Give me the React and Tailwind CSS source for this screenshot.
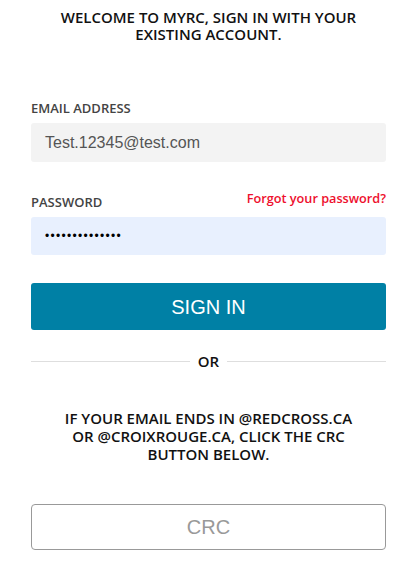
import React from "react";

export default function App() {
  const ui = "font-['Open_Sans',sans-serif]";
  const arial = "font-['Liberation_Sans',Arial,sans-serif]";

  return (
    <div className={`w-[412px] h-[567px] bg-white overflow-hidden ${ui}`}>
      <div className="pl-[31px] pr-[26px] pt-[9px]">
        {/* HEADING */}
        <h1 className="mx-auto w-[305px] text-center text-[15px] leading-[17px] font-semibold text-[#111]">
          WELCOME TO MYRC, SIGN IN WITH YOUR EXISTING ACCOUNT.
        </h1>

        {/* EMAIL */}
        <label className="block mt-[57px] text-[13px] leading-[16px] font-semibold text-[#444]">
          EMAIL ADDRESS
        </label>
        <div className="mt-[7px] h-[39px] rounded-[3px] bg-[#f3f3f3] flex items-center px-[14px]">
          <span className={`${arial} text-[16px] text-[#555]`}>Test.12345@test.com</span>
        </div>

        {/* PASSWORD */}
        <div className="mt-[32px] flex items-start justify-between">
          <label className="text-[13px] leading-[16px] font-semibold text-[#444]">PASSWORD</label>
          <a className="-mt-[4px] text-[12.7px] leading-[16px] font-semibold text-[#ee0f2d]">
            Forgot your password?
          </a>
        </div>
        <div className="mt-[7px] h-[38px] rounded-[3px] bg-[#e8f0fe] flex items-center px-[14px]">
          <span className={`${arial} text-[12px] tracking-[1.3px] text-black`}>
            ••••••••••••••
          </span>
        </div>

        {/* SIGN IN */}
        <button className={`mt-[28px] w-full h-[47px] rounded-[3px] bg-[#0080a5] text-white text-[20px] ${arial}`}>
          SIGN IN
        </button>

        {/* OR */}
        <div className="mt-[21px] h-[20px] flex items-center gap-[8px]">
          <div className="flex-1 h-px bg-[#dedede]" />
          <span className="text-[15px] leading-[20px] font-semibold text-[#111]">OR</span>
          <div className="flex-1 h-px bg-[#dedede]" />
        </div>

        {/* CRC INFO */}
        <p className="mx-auto mt-[38px] w-[300px] text-center text-[15px] leading-[18px] font-semibold text-[#111]">
          IF YOUR EMAIL ENDS IN @REDCROSS.CA OR @CROIXROUGE.CA, CLICK THE CRC BUTTON BELOW.
        </p>

        <button className={`mt-[41px] w-full h-[46px] rounded-[4px] border border-[#999] bg-white text-[#999] text-[20px] ${arial}`}>
          CRC
        </button>
      </div>
    </div>
  );
}
